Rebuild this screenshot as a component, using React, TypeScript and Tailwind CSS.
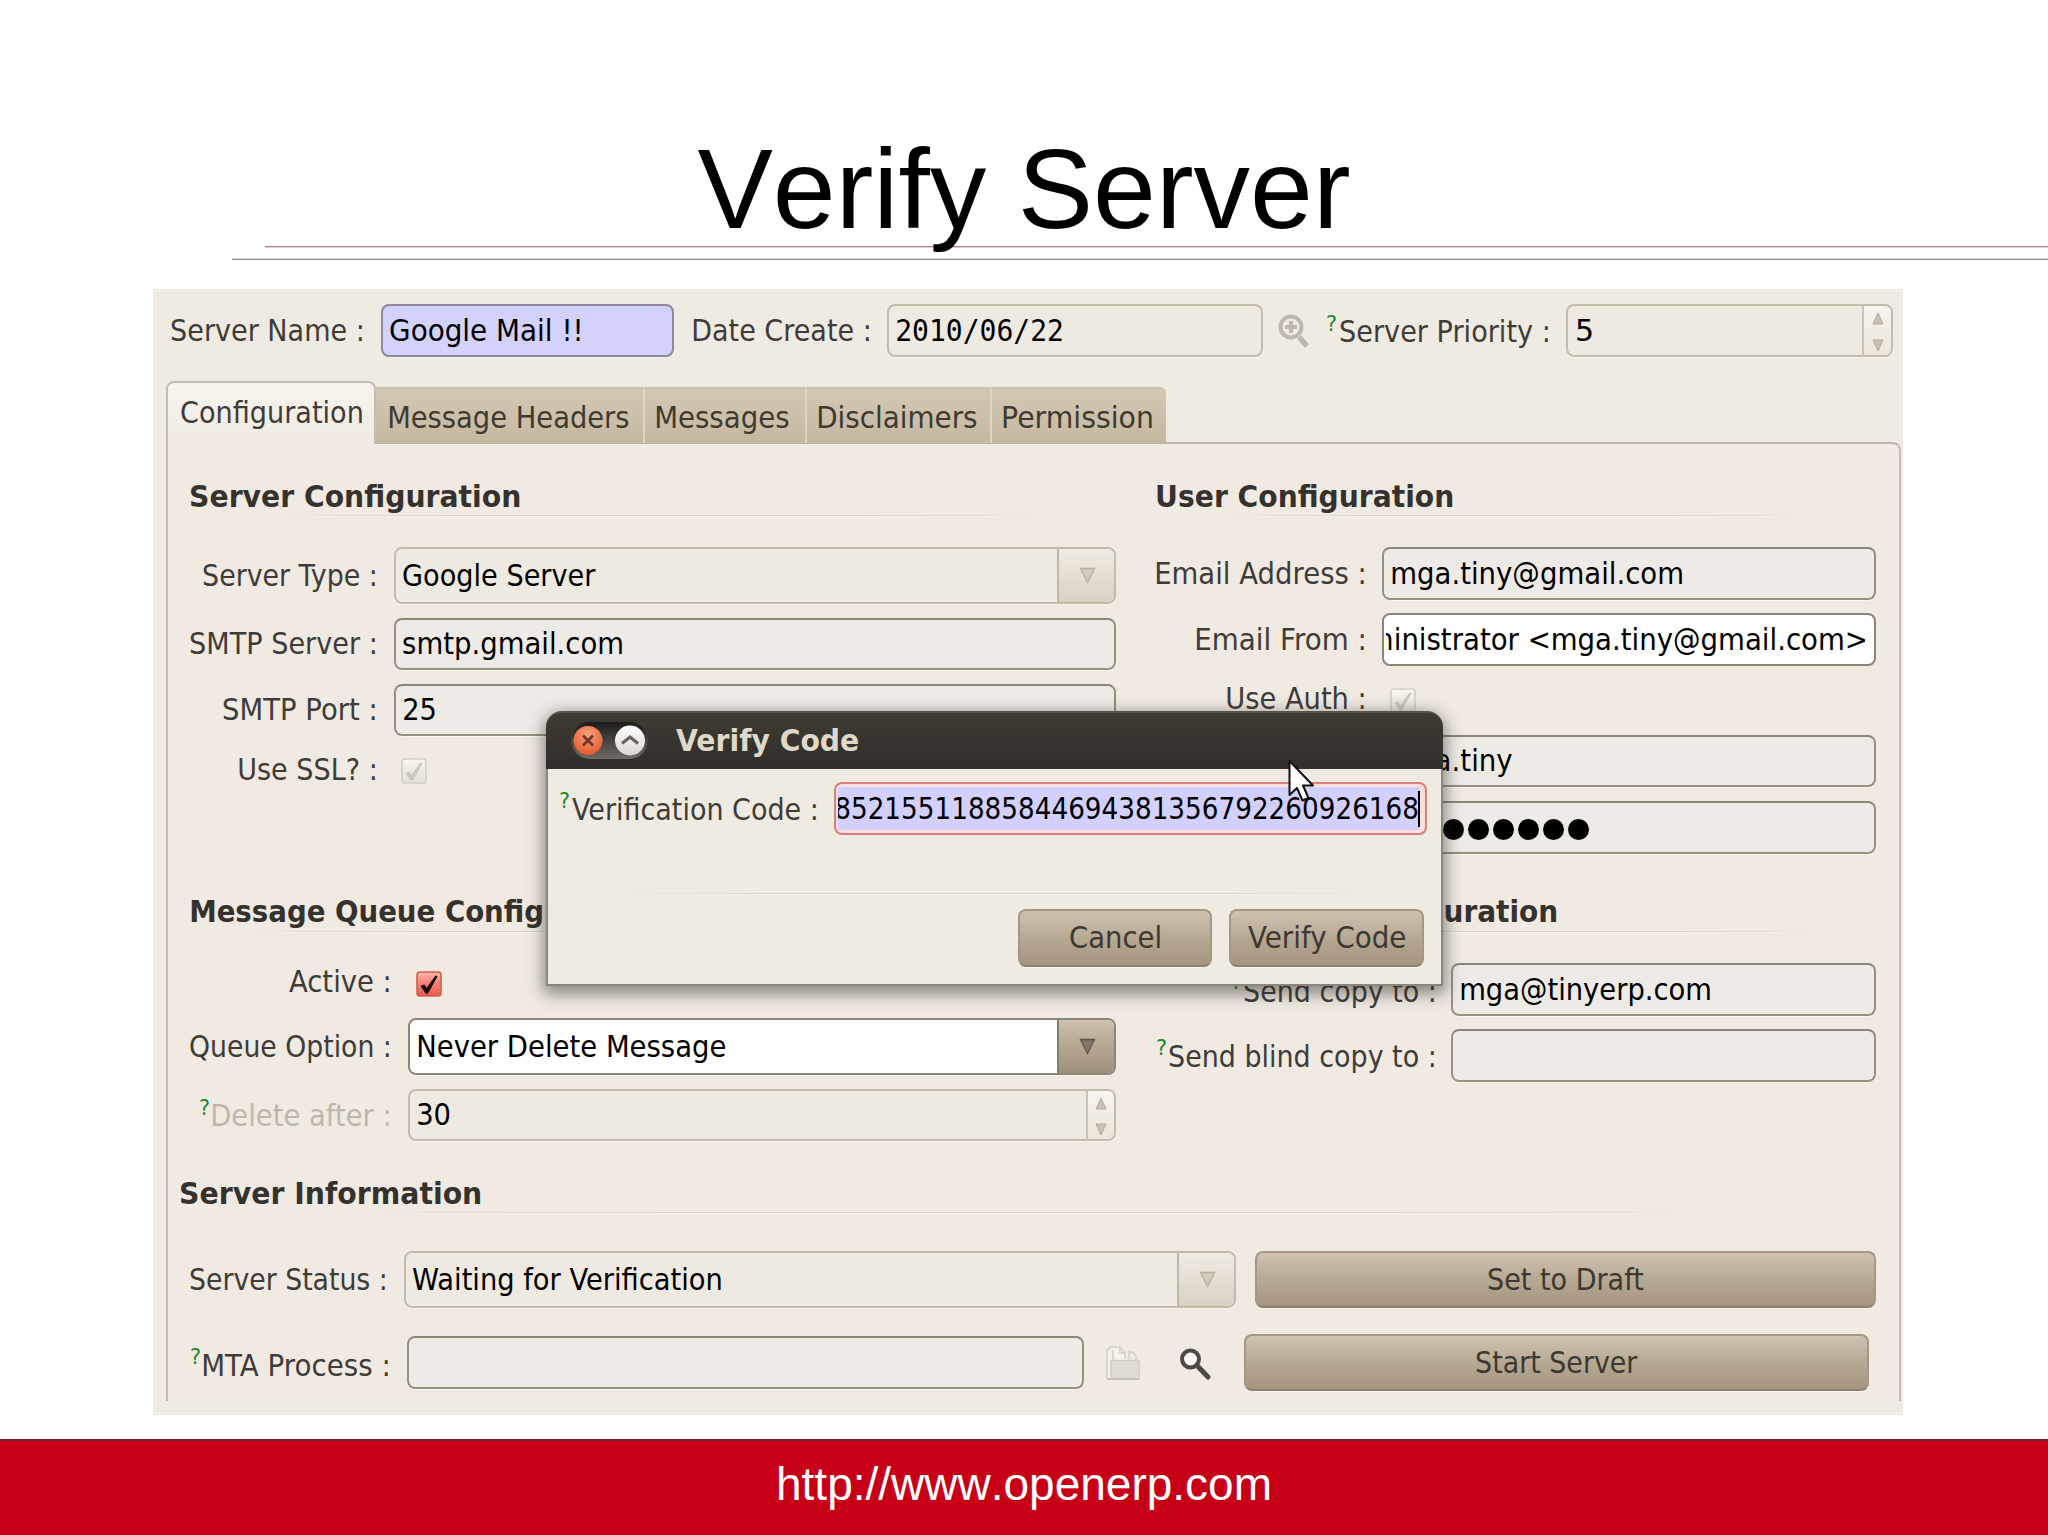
import React from "react";

type Face = "sans" | "bold" | "mono";

const FONTS: Record<Face, string> = {
  sans: '30px "DejaVu Sans", sans-serif',
  bold: 'bold 30px "DejaVu Sans", sans-serif',
  mono: '30px "DejaVu Sans Mono", monospace',
};

const pen = document.createElement("canvas").getContext("2d")!;

/** One line of condensed text whose drawn width is `w` pixels. */
function T({ children, w, face = "sans", className = "" }: { children: string; w: number; face?: Face; className?: string }) {
  pen.font = FONTS[face];
  const m = pen.measureText(children);
  const sx = w / (m.actualBoundingBoxRight + m.actualBoundingBoxLeft);
  const shift = m.actualBoundingBoxLeft * sx;
  const family =
    face === "mono"
      ? "font-['DejaVu_Sans_Mono',monospace]"
      : face === "bold"
        ? "font-['DejaVu_Sans',sans-serif] font-bold"
        : "font-['DejaVu_Sans',sans-serif]";
  return (
    <span className={`block h-9 shrink-0 ${className}`} style={{ width: w }}>
      <span
        className={`block w-max origin-left whitespace-pre text-[30px] leading-9 ${family}`}
        style={{ transform: `translate(${shift}px, 0px) scaleX(${sx})` }}
      >
        {children}
      </span>
    </span>
  );
}

function Help({ className = "" }: { className?: string }) {
  return (
    <span className={`mr-[2px] block w-[10px] shrink-0 self-start font-['DejaVu_Sans',sans-serif] text-[22px] leading-6 text-[#1d8a2a] ${className}`}>
      <span className="block origin-left -translate-x-px scale-x-[0.95]">?</span>
    </span>
  );
}

function Label({ children, w, col, help, helpTop = "mt-[7px]", className = "text-[#3f3c38]" }: { children: string; w: number; col: string; help?: boolean; helpTop?: string; className?: string }) {
  return (
    <div className={`flex h-full shrink-0 items-center justify-end ${col}`}>
      {help && <Help className={helpTop} />}
      <T w={w} className={className}>{children}</T>
    </div>
  );
}

function Heading({ children, w, rule, className = "ml-[2px]" }: { children: string; w: number; rule: string; className?: string }) {
  return (
    <div>
      <T w={w} face="bold" className={`text-[#35322e] ${className}`}>{children}</T>
      <Rule className={rule} />
    </div>
  );
}

function Rule({ className = "" }: { className?: string }) {
  return (
    <div className={className}>
      <div className="h-px bg-[linear-gradient(90deg,transparent,#d9d4c9_25%,#d9d4c9_75%,transparent)]" />
      <div className="h-px bg-[linear-gradient(90deg,transparent,#f7f3ec_25%,#f7f3ec_75%,transparent)]" />
    </div>
  );
}

function Field({ children, className }: { children?: React.ReactNode; className: string }) {
  return (
    <div className={`flex shrink-0 items-center overflow-hidden rounded-[8px] border-2 pl-[7px] text-black ${className}`}>{children}</div>
  );
}

const ON = "border-[#98917f] border-t-[#8c8677] bg-[#eeebe6] shadow-[0_1px_0_#f8f5ee]";
const OFF = "border-[#c3bcad] bg-[#efeae1] shadow-[0_1px_0_#f8f5ee]";

function Spinner({ className }: { className: string }) {
  return (
    <div className={`ml-auto flex h-full flex-col items-center justify-between border-l-2 border-[#cbc4b6] bg-linear-to-b from-[#f8f4ee] to-[#ebe5da] pb-[3px] pt-[6px] ${className}`}>
      <svg width="12" height="13" viewBox="0 0 12 13"><path d="M6 1 11 12H1Z" fill="#c9c1b4" stroke="#b3ab9c" /></svg>
      <svg width="12" height="13" viewBox="0 0 12 13"><path d="M6 12 11 1H1Z" fill="#c9c1b4" stroke="#b3ab9c" /></svg>
    </div>
  );
}

function Drop({ active }: { active?: boolean }) {
  return (
    <div
      className={`ml-auto flex h-full w-[57px] items-center justify-center border-l-2 pl-[2px] ${
        active
          ? "border-[#877d6b] bg-linear-to-b from-[#cdc0b0] via-[#b4a691] to-[#9f927d]"
          : "border-[#bfb7a7] bg-linear-to-b from-[#f0ebe3] via-[#e4ded3] to-[#d9d2c3]"
      }`}
    >
      <svg width="17" height="17" viewBox="0 0 17 17">
        <path d="M1.500 1.500H15.500L8.500 15.500Z" fill={active ? "#82766a" : "#d3ccbc"} stroke={active ? "#5f564b" : "#b7af9f"} strokeWidth="1.300" />
      </svg>
    </div>
  );
}

function Check({ active, className = "" }: { active?: boolean; className?: string }) {
  return (
    <svg className={`shrink-0 ${className}`} width="26" height="26" viewBox="0 0 26 26">
      <defs>
        <linearGradient id="red" x1="0" y1="0" x2="0" y2="1">
          <stop offset="0" stopColor="#f9b5ac" />
          <stop offset="0.500" stopColor="#f57f74" />
          <stop offset="1" stopColor="#ea5a4b" />
        </linearGradient>
        <linearGradient id="pale" x1="0" y1="0" x2="0" y2="1">
          <stop offset="0" stopColor="#f8f6f1" />
          <stop offset="1" stopColor="#e3dfd5" />
        </linearGradient>
      </defs>
      <rect x="1" y="1" width="24" height="24" rx="3" fill={active ? "url(#red)" : "url(#pale)"} stroke={active ? "#d0604f" : "#d3cec2"} strokeWidth="1.600" />
      <path
        d="M4.500 15 8.500 13.500 10.500 17 19.500 4.500 21.500 5.500 12 22.500H9.500Z"
        fill={active ? "#1c0806" : "#cbc7bd"}
      />
    </svg>
  );
}

function Button({ children, w, className }: { children: string; w: number; className: string }) {
  return (
    <div className={`flex shrink-0 items-center justify-center rounded-[8px] border-2 border-[#a49884] border-b-[#8d816d] bg-linear-to-b from-[#cfc2b2] via-[#b6a994] to-[#a3957f] text-[#3d3830] shadow-[0_1px_0_#f8f5ee] ${className}`}>
      <T w={w}>{children}</T>
    </div>
  );
}

function Tab({ children, w, className }: { children: string; w: number; className: string }) {
  return (
    <div className={`h-[56px] border-t-2 border-t-[#cdc2ad] bg-linear-to-b from-[#d3c8b5] to-[#c4b89f] pt-[11px] text-[#3f3a30] ${className}`}>
      <T w={w}>{children}</T>
    </div>
  );
}

function ServerBar() {
  return (
    <div className="flex h-[53px] items-center">
      <T w={191} className="text-[#3f3c38]">Server Name :</T>
      <Field className="ml-[19px] h-full w-[293px] border-[#8d88a0] bg-[#d3d1fe]"><T w={190}>Google Mail !!</T></Field>
      <T w={176} className="ml-[19px] text-[#3f3c38]">Date Create :</T>
      <Field className={`ml-[18px] h-full w-[376px] ${OFF}`}><T w={165} face="mono" className="ml-px">2010/06/22</T></Field>
      <svg className="ml-[14px]" width="34" height="36" viewBox="0 0 34 36" fill="none" stroke="#bdb7ae">
        <circle cx="14" cy="14" r="10.500" strokeWidth="4" />
        <path d="M14 8V20M8 14H20" strokeWidth="4" />
        <path d="M22 24 30 33" strokeWidth="5.500" />
      </svg>
      <Help className="ml-[16px] mt-[8px]" />
      <T w={208} className="ml-px translate-y-[1px] text-[#3f3c38]">Server Priority :</T>
      <Field className={`ml-[18px] h-full w-[327px] ${OFF}`}><T w={15} className="ml-[2px]">5</T><Spinner className="w-[29px]" /></Field>
    </div>
  );
}

function Tabs() {
  return (
    <div className="relative z-10 -mb-[2px] ml-[13px] flex h-[63px] items-end">
      <div className="h-[63px] w-[210px] rounded-t-[8px] border-2 border-b-0 border-[#c5bdb0] bg-linear-to-b from-[#f8f4ed] to-[#f0eae3] pl-[13px] pt-[12px] text-[#3f3c38]">
        <T w={181}>Configuration</T>
      </div>
      <div className="flex h-[57px]">
        <Tab w={240} className="w-[267px] pl-[13px]">Message Headers</Tab>
        <Tab w={133} className="w-[162px] border-l-2 border-l-[#ddd5c6] pl-[11px]">Messages</Tab>
        <Tab w={159} className="w-[185px] border-l-2 border-l-[#ddd5c6] pl-[11px]">Disclaimers</Tab>
        <Tab w={149} className="w-[176px] rounded-tr-[6px] border-l-2 border-l-[#ddd5c6] pl-[11px]">Permission</Tab>
      </div>
    </div>
  );
}

function LeftColumn() {
  return (
    <div className="w-[927px]">
      <Heading w={329} rule="ml-[60px] w-[820px]">Server Configuration</Heading>
      <div className="mt-[30px] flex h-[57px] items-center">
        <Label col="w-[186px]" w={172}>Server Type :</Label>
        <Field className={`ml-[19px] h-full w-[722px] ${OFF}`}><T w={193}>Google Server</T><Drop /></Field>
      </div>
      <div className="mt-[14px] flex h-[52px] items-center">
        <Label col="w-[186px]" w={185}>SMTP Server :</Label>
        <Field className={`ml-[19px] h-full w-[722px] ${ON}`}><T w={219}>smtp.gmail.com</T></Field>
      </div>
      <div className="mt-[14px] flex h-[52px] items-center">
        <Label col="w-[186px]" w={152}>SMTP Port :</Label>
        <Field className={`ml-[19px] h-full w-[722px] ${ON}`}><T w={31} className="ml-px">25</T></Field>
      </div>
      <div className="mt-[20px] flex h-[27px] items-center">
        <Label col="w-[186px]" w={136}>Use SSL? :</Label>
        <Check className="ml-[26px] mt-[2px]" />
      </div>
      <div className="mt-[111px]">
        <Heading w={465} rule="ml-[20px] mt-px w-[860px]">Message Queue Configuration</Heading>
      </div>
      <div className="mt-[31px] flex h-[36px] items-center">
        <Label col="w-[200px]" w={100}>Active :</Label>
        <Check active className="ml-[27px] mt-[4px]" />
      </div>
      <div className="mt-[18px] flex h-[57px] items-center">
        <Label col="w-[200px]" w={199}>Queue Option :</Label>
        <Field className="ml-[19px] h-full w-[708px] border-[#8c8677] bg-white shadow-[0_1px_0_#f8f5ee]"><T w={307} className="ml-px">Never Delete Message</T><Drop active /></Field>
      </div>
      <div className="mt-[14px] flex h-[52px] items-center">
        <Label col="w-[200px]" w={177} help className="translate-y-px text-[#bfb8aa]">Delete after :</Label>
        <Field className={`ml-[19px] h-full w-[708px] ${OFF}`}><T w={32} className="ml-px">30</T><Spinner className="w-[28px]" /></Field>
      </div>
    </div>
  );
}

function RightColumn() {
  return (
    <div className="ml-[39px] w-[721px]">
      <Heading w={296} rule="ml-[50px] w-[620px]">User Configuration</Heading>
      <div className="mt-[30px] flex h-[53px] items-center">
        <Label col="w-[209px]" w={208}>Email Address :</Label>
        <Field className={`ml-[18px] h-full w-[494px] ${ON}`}><T w={290} className="ml-px">mga.tiny@gmail.com</T></Field>
      </div>
      <div className="mt-[13px] flex h-[53px] items-center">
        <Label col="w-[209px]" w={168}>Email From :</Label>
        <div className="ml-[18px] flex h-full w-[494px] items-center rounded-[8px] border-2 border-[#8c8677] bg-white pl-[2px] pr-[9px] text-black">
          <div className="flex w-full justify-end overflow-hidden"><T w={534}>Administrator &lt;mga.tiny@gmail.com&gt;</T></div>
        </div>
      </div>
      <div className="mt-[15px] flex h-[36px] items-center">
        <Label col="w-[209px]" w={137}>Use Auth :</Label>
        <Check className="ml-[26px] mt-[4px]" />
      </div>
      <div className="mt-[18px] flex h-[52px] items-center">
        <Field className={`ml-[227px] h-full w-[494px] ${ON}`}><T w={120} className="ml-px">mga.tiny</T></Field>
      </div>
      <div className="mt-[14px] flex h-[53px] items-center">
        <Field className={`ml-[227px] h-full w-[494px] gap-[4px] ${ON}`}>
          {[0, 1, 2, 3, 4, 5, 6, 7].map((i) => (
            <span key={i} className="ml-[2px] -mr-[2px] mt-[4px] block size-[21px] rounded-full bg-black" />
          ))}
        </Field>
      </div>
      <div className="mt-[40px]">
        <Heading w={389} className="ml-[13px]" rule="ml-[40px] mt-px w-[640px]">Send Copy Configuration</Heading>
      </div>
      <div className="mt-[30px] flex h-[53px] items-center">
        <Label col="w-[279px]" w={190} help className="translate-y-[2px] text-[#3f3c38]">Send copy to :</Label>
        <Field className={`ml-[17px] h-full w-[425px] ${ON}`}><T w={249} className="ml-px">mga@tinyerp.com</T></Field>
      </div>
      <div className="mt-[13px] flex h-[53px] items-center">
        <Label col="w-[279px]" w={265} help className="translate-y-[1px] text-[#3f3c38]">Send blind copy to :</Label>
        <Field className={`ml-[17px] h-full w-[425px] ${ON}`} />
      </div>
    </div>
  );
}

function ServerInformation() {
  return (
    <div className="mt-[34px]">
      <div className="-ml-[10px]">
        <Heading w={300} rule="ml-[130px] w-[1440px]">Server Information</Heading>
      </div>
      <div className="mt-[37px] flex h-[57px] items-center">
        <T w={195} className="ml-px text-[#3f3c38]">Server Status :</T>
        <Field className={`ml-[19px] h-full w-[832px] ${OFF}`}><T w={308}>Waiting for Verification</T><Drop /></Field>
        <Button w={156} className="ml-[19px] h-full w-[621px]">Set to Draft</Button>
      </div>
      <div className="mt-[26px] flex h-[57px] items-center">
        <Help className="ml-[2px] mt-[11px]" />
        <T w={185} className="translate-y-[3px] text-[#3f3c38]">MTA Process :</T>
        <Field className={`ml-[19px] h-[53px] w-[677px] ${ON}`} />
        <svg className="ml-[21px]" width="36" height="36" viewBox="0 0 36 36" fill="none" stroke="#d3cec5" strokeWidth="1.500">
          <path d="M2 34V4H5V2H15L20 8V14" fill="#f4f1eb" />
          <path d="M8 16V5M20 8H15V2M24 14V7H28L31 11V15" />
          <path d="M6 15.500H34V34H6Z" fill="#dfdbd3" />
          <path d="M2 34H34" stroke="#bfbab0" />
        </svg>
        <svg className="ml-[38px]" width="34" height="36" viewBox="0 0 34 36" fill="none" stroke="#4d4a46">
          <circle cx="11.500" cy="14" r="8.500" fill="#faf8f5" strokeWidth="4" />
          <path d="M18 20.500 29 32" strokeWidth="5" strokeLinecap="round" />
        </svg>
        <Button w={162} className="ml-auto mr-[30px] h-full w-[625px]">Start Server</Button>
      </div>
    </div>
  );
}

function VerifyDialog() {
  return (
    <div className="absolute left-[546px] top-[711px] h-[275px] w-[897px] rounded-t-[16px] border-2 border-t-0 border-[#8a867d] bg-[#efebe3] shadow-[0_5px_16px_3px_rgba(40,36,30,0.5)]">
      <div className="-mx-[2px] flex h-[58px] items-center rounded-t-[16px] border-t-2 border-[#55524a] bg-linear-to-b from-[#3e3b34] to-[#312e2a] pl-[24px]">
        <svg width="80" height="42" viewBox="0 0 80 42">
          <defs>
            <linearGradient id="pill" x1="0" y1="0" x2="0" y2="1">
              <stop offset="0" stopColor="#1d1b19" />
              <stop offset="1" stopColor="#6e6b66" />
            </linearGradient>
            <radialGradient id="close" cx="0.500" cy="0.300" r="0.700">
              <stop offset="0" stopColor="#f9a07a" />
              <stop offset="1" stopColor="#e35a2c" />
            </radialGradient>
            <linearGradient id="shade" x1="0" y1="0" x2="0" y2="1">
              <stop offset="0" stopColor="#ffffff" />
              <stop offset="1" stopColor="#d9d6d1" />
            </linearGradient>
          </defs>
          <rect x="1" y="2" width="77" height="37" rx="18.500" fill="url(#pill)" />
          <circle cx="18" cy="20.500" r="14.500" fill="url(#close)" />
          <path d="M13 15.500 23 25.500M23 15.500 13 25.500" stroke="#6b3a28" strokeWidth="2.600" />
          <circle cx="60" cy="20.500" r="15" fill="url(#shade)" />
          <path d="M52 23.500 60 17 68 23.500" fill="none" stroke="#66625d" strokeWidth="3.200" />
        </svg>
        <T w={182} face="bold" className="ml-[26px] text-[#dfd9cc]">Verify Code</T>
      </div>
      <div className="mt-[13px] flex h-[53px] items-center pl-[11px]">
        <Help className="ml-px mt-[7px]" />
        <T w={244} className="translate-y-[1px] text-[#3f3c38]">Verification Code :</T>
        <div className="ml-[18px] flex h-full w-[593px] items-center rounded-[8px] border-2 border-[#d97f7d] bg-[#fbe0df] pl-[2px] pr-[5px] text-black">
          <div className="flex h-[43px] w-full items-center justify-end overflow-hidden bg-[#d1d0fe]">
            <T w={582}>85215511885844694381356792260926168</T>
            <span className="block h-[36px] w-[2px] shrink-0 bg-black" />
          </div>
        </div>
      </div>
      <Rule className="ml-[50px] mt-[58px] w-[790px]" />
      <div className="mt-[14px] flex h-[58px] justify-end gap-[17px] pr-[17px]">
        <Button w={90} className="h-full w-[194px]">Cancel</Button>
        <Button w={157} className="h-full w-[195px]">Verify Code</Button>
      </div>
    </div>
  );
}

export default function App() {
  return (
    <div className="relative flex h-[1535px] w-[2048px] flex-col overflow-hidden bg-white">
      <header className="relative h-[289px] shrink-0">
        <div className="absolute left-[265px] right-0 top-[246px] h-[2px] border-b border-t border-b-[#f3c9d0] border-t-[#a08a8e]" />
        <div className="absolute left-[232px] right-0 top-[258px] h-[2px] border-b border-t border-b-[#8e8a8c] border-t-[#dcdcdc]" />
        <h1 className="relative pt-[124px] text-center font-['Liberation_Sans',Arial,sans-serif] text-[113px] leading-[130px] text-black [font-kerning:none]">Verify Server</h1>
      </header>
      <main className="ml-[153px] flex h-[1126px] w-[1750px] shrink-0 flex-col bg-[#efeae2] pt-[15px]">
        <div className="pl-[18px]"><ServerBar /></div>
        <div className="h-[24px]" />
        <Tabs />
        <section className="ml-[13px] h-[959px] w-[1735px] rounded-tr-[8px] border-2 border-b-0 border-[#c5bdb0] border-t-[#bdb5a8] bg-[#f0eae3] pl-[21px] pt-[35px]">
          <div className="flex h-[663px]">
            <LeftColumn />
            <RightColumn />
          </div>
          <ServerInformation />
        </section>
      </main>
      <footer className="mt-auto flex h-[96px] shrink-0 items-center justify-center border-t-2 border-[#7d2129] bg-[#c80017] pb-[8px] font-['Liberation_Sans',Arial,sans-serif] text-[46px] leading-none text-white [font-kerning:none]">
        http://www.openerp.com
      </footer>
      <VerifyDialog />
      <svg className="absolute left-[1285px] top-[756px]" width="32" height="48" viewBox="0 0 32 48">
        <path d="M4.500 5V39L12 32 17.500 44.500 23.500 42 18 29.500H28Z" fill="#fff" stroke="#111" strokeWidth="2" strokeLinejoin="round" />
      </svg>
    </div>
  );
}
